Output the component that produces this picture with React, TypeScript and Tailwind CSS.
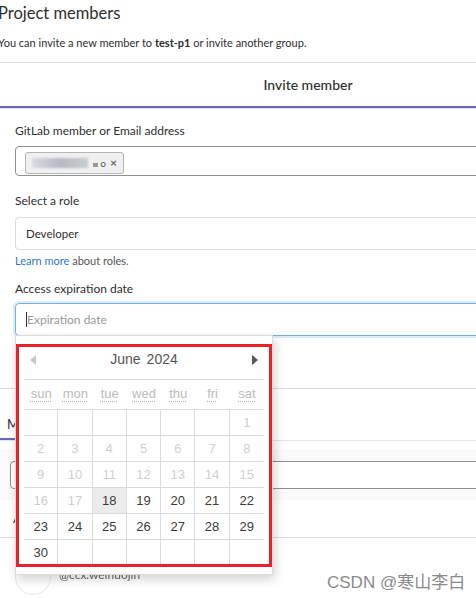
import React from 'react';

const weekdays = ['sun', 'mon', 'tue', 'wed', 'thu', 'fri', 'sat'];

// June 2024 starts on saturday
const cells: (number | null)[] = [
  null, null, null, null, null, null, 1,
  ...Array.from({ length: 29 }, (_, i) => i + 2),
  null, null, null, null, null, null,
];

function Calendar() {
  return (
    <div className="absolute left-[15px] top-[335px] w-[258px] h-[240px] bg-white border border-[#dbdbdb] shadow-[2px_4px_10px_rgba(0,0,0,0.18)] font-['Liberation_Sans',Arial,sans-serif]">
      {/* red annotation box */}
      <div className="absolute left-[0px] top-[8px] w-[256px] h-[223px] border-[3px] border-[#e8202a] pointer-events-none z-10" />
      <div className="pl-[8px] pt-[10px]">
        <div className="w-[240px] h-[34px] flex items-center justify-between border-b border-[#dbdbdb] px-[6px] pb-[6px]">
          <svg width="6" height="10" viewBox="0 0 6 10"><path d="M6 0 L0 5 L6 10 Z" fill="#c8c8c8" /></svg>
          <div className="text-[14px] text-[#555] flex gap-[6px]">
            <span>June</span>
            <span>2024</span>
          </div>
          <svg width="6" height="10" viewBox="0 0 6 10"><path d="M0 0 L6 5 L0 10 Z" fill="#555" /></svg>
        </div>
        <div className="w-[240px] grid grid-cols-7 h-[30px] items-center border-b border-[#dbdbdb] pb-[3px]">
          {weekdays.map((d) => (
            <div key={d} className="text-center">
              <span className="text-[13px] text-[#bbb] underline decoration-dotted decoration-[#bbb] underline-offset-[3px]">{d}</span>
            </div>
          ))}
        </div>
        <div className="w-[240px] grid grid-cols-7">
          {cells.map((n, i) => (
            <div
              key={i}
              className={`h-[26px] flex items-center justify-center text-[13px] border-b border-[#dbdbdb] ${
                i % 7 !== 6 ? 'border-r' : ''
              } ${n !== null && n < 18 ? 'text-[#cfcfcf]' : 'text-[#3a3a3a]'} ${n === 18 ? 'bg-[#ececec]' : ''}`}
            >
              {n ?? ''}
            </div>
          ))}
        </div>
      </div>
    </div>
  );
}

export default function App() {
  return (
    <div className="relative w-[476px] h-[598px] overflow-hidden bg-white text-[#2e2e2e] font-['Lato','Liberation_Sans',sans-serif]">
      <div className="w-[620px] -ml-[2px]">
        <h3 className="pt-[3px] text-[16.5px] leading-[20px] text-[#2e2e2e]">Project members</h3>
        <p className="mt-[12px] text-[11px] leading-[16px] text-[#2e2e2e]">
          You can invite a new member to <strong className="font-bold">test-p1</strong> or invite another group.
        </p>

        <div className="mt-[11px] border-t border-[#dbdbdb]">
          <div className="h-[45px] flex items-center justify-center border-b-2 border-[#6666c4]">
            <span className="text-[14px] font-medium text-[#2e2e2e]">Invite member</span>
          </div>
          <div className="h-px bg-[#e5e5e5]" />

          <div className="pl-[17px] pr-[15px]">
            <label className="block mt-[14px] text-[12px] leading-[16px] text-[#2e2e2e]">GitLab member or Email address</label>
            <div className="mt-[7px] h-[30px] border border-[#8f8f8f] rounded-[4px] flex items-center px-[9px]">
              <div className="h-[22px] mt-[4px] w-[99px] bg-[#f0f0f0] border border-[#b5b5b5] rounded-[3px] flex items-center px-[6px] gap-[2px]">
                <div className="w-[62px] h-[10px] bg-gradient-to-r from-[#d8dce4] via-[#b7b9c0] to-[#c9ccd2] blur-[1px]" />
                <div className="w-[6px] h-[4px] bg-[#999] mt-[4px] ml-[3px]" />
                <span className="text-[10px] text-[#555] leading-none">o</span>
                <span className="text-[12px] text-[#666] font-bold leading-none ml-[2px]">×</span>
              </div>
            </div>

            <label className="block mt-[17px] text-[12px] leading-[16px] text-[#2e2e2e]">Select a role</label>
            <div className="mt-[8px] h-[33px] border border-[#dbdbdb] rounded-[4px] flex items-center px-[10px] text-[11.5px] text-[#2e2e2e]">
              Developer
            </div>
            <p className="mt-[3px] text-[11px] leading-[16px] text-[#555]">
              <span className="text-[#1f78d1]">Learn more</span> about roles.
            </p>

            <label className="block mt-[12px] text-[12px] leading-[16px] text-[#2e2e2e]">Access expiration date</label>
            <div className="mt-[6px] h-[33px] border border-[#73afea] rounded-[4px] shadow-[0_0_0_2px_rgba(115,175,234,0.25)] flex items-center px-[10px] text-[12px]">
              <span className="w-px h-[15px] bg-[#333]" />
              <span className="text-[#999]">Expiration date</span>
            </div>
          </div>

          <div className="mt-[52px] border-t border-[#dbdbdb]">
            <div className="h-[51px] flex items-end">
              <div className="pl-[9px] pb-[4px] border-b-2 border-[#6666c4] pr-[10px] text-[13px] text-[#2e2e2e]">Members</div>
            </div>
            <div className="h-px bg-[#e5e5e5]" />
            <div className="mt-[8px] h-[51px] bg-[#fafafa] flex items-center px-[12px]">
              <div className="w-full h-[28px] border border-[#8f8f8f] rounded-[4px] bg-white" />
            </div>
            <div className="h-[37px] flex items-center pl-[15px] text-[12px]">Account</div>
            <div className="border-t border-[#dbdbdb] h-[60px] flex items-center pl-[17px] gap-[8px]">
              <div className="w-[36px] h-[36px] rounded-full border border-[#e5e5e5] mt-[18px]" />
              <span className="text-[12px] text-[#666] blur-[0.6px] mt-[14px]">@ccx.weinuojin</span>
            </div>
          </div>
        </div>
      </div>

      <Calendar />

      <div className="absolute left-[327px] top-[570px] text-[17px] text-[#8a8a8a] font-['Liberation_Sans','Noto_Sans_CJK_SC',sans-serif]">
        CSDN @寒山李白
      </div>
    </div>
  );
}
